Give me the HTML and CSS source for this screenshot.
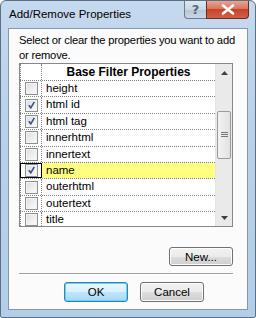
FILE: index.html
```html
<!DOCTYPE html>
<html>
<head>
<meta charset="utf-8">
<link rel="stylesheet" href="styles.css">
</head>
<body>
<div class="window">
  <div class="titlebar">
    <span class="title">Add/Remove Properties</span>
    <div class="caption-btns">
      <div class="cbtn help">?</div>
      <div class="cbtn close">
        <svg width="14" height="11" viewBox="0 0 14 11"><path d="M2 1.5 L12 9.5 M12 1.5 L2 9.5" stroke="#fff" stroke-width="2.6" stroke-linecap="round"/></svg>
      </div>
    </div>
  </div>
  <div class="client">
    <p class="intro">Select or clear the properties you want to add or remove.</p>
    <div class="listbox">
      <div class="grid">
        <div class="hrow">
          <div class="ccell"></div>
          <div class="hcell">Base Filter Properties</div>
        </div>
        <div class="row"><div class="ccell"><span class="cb"></span></div><div class="tcell">height</div></div>
        <div class="row"><div class="ccell"><span class="cb on"></span></div><div class="tcell">html id</div></div>
        <div class="row"><div class="ccell"><span class="cb on"></span></div><div class="tcell">html tag</div></div>
        <div class="row"><div class="ccell"><span class="cb"></span></div><div class="tcell">innerhtml</div></div>
        <div class="row"><div class="ccell"><span class="cb"></span></div><div class="tcell">innertext</div></div>
        <div class="row sel"><div class="ccell focus"><span class="cb on"></span></div><div class="tcell">name</div></div>
        <div class="row"><div class="ccell"><span class="cb"></span></div><div class="tcell">outerhtml</div></div>
        <div class="row"><div class="ccell"><span class="cb"></span></div><div class="tcell">outertext</div></div>
        <div class="row"><div class="ccell"><span class="cb"></span></div><div class="tcell">title</div></div>
      </div>
      <div class="scrollbar">
        <div class="arrow up"><svg width="7" height="4" viewBox="0 0 7 4"><path d="M0 4 L3.5 0 L7 4Z" fill="#404040"/></svg></div>
        <div class="track">
          <div class="thumb"><span class="grip"></span></div>
        </div>
        <div class="arrow down"><svg width="7" height="4" viewBox="0 0 7 4"><path d="M0 0 L3.5 4 L7 0Z" fill="#404040"/></svg></div>
      </div>
    </div>
    <div class="newrow"><button class="btn new">New...</button></div>
    <div class="sep"></div>
    <div class="actions">
      <button class="btn ok">OK</button>
      <button class="btn">Cancel</button>
    </div>
  </div>
</div>
</body>
</html>
```
FILE: styles.css
```css
html, body {
  margin: 0;
  padding: 0;
  width: 256px;
  height: 318px;
  overflow: hidden;
  background: #fff;
  font-family: "Liberation Sans", Arial, sans-serif;
  font-size: 11px;
  color: #000;
}
.window {
  box-sizing: border-box;
  width: 256px;
  height: 318px;
  border: 1px solid #5b6f86;
  border-radius: 6px 6px 2px 2px;
  background: linear-gradient(180deg, #c5d9ee 0%, #b9d1ea 40%, #b4cde8 100%);
  display: flex;
  flex-direction: column;
}
.titlebar {
  height: 27px;
  display: flex;
  justify-content: space-between;
  align-items: flex-start;
  padding-left: 8px;
  flex-shrink: 0;
}
.title {
  margin-top: 7px;
  font-size: 11.5px;
  color: #000;
}
.caption-btns {
  display: flex;
  margin-right: 6px;
}
.cbtn {
  height: 18px;
  box-sizing: border-box;
  border: 1px solid #6a7b8f;
  border-top: none;
  display: flex;
  align-items: center;
  justify-content: center;
}
.help {
  width: 22px;
  border-radius: 0 0 0 4px;
  border-right: none;
  background: linear-gradient(180deg, #dfe7f0 0%, #cbd6e3 50%, #b7c6d8 51%, #c9d6e5 100%);
  color: #556a80;
  font-weight: bold;
  font-size: 13px;
  font-family: "DejaVu Sans", sans-serif;
}
.close {
  width: 43px;
  border-radius: 0 0 4px 0;
  border-color: #6b2a22;
  background: linear-gradient(180deg, #e8a493 0%, #d5775f 45%, #c7432a 50%, #d26048 100%);
}
.client {
  flex: 1;
  margin: 0 7px 7px 7px;
  border: 1px solid #8597ab;
  background: #fbfbfb;
  padding: 0 14px 0 10px;
  display: flex;
  flex-direction: column;
}
.intro {
  margin: 4px -6px 0 0;
  line-height: 15px;
  font-size: 11.2px;
  letter-spacing: -0.2px;
  height: 30px;
}
.listbox {
  height: 162px;
  border: 1px solid #828790;
  background: #fff;
  display: flex;
  overflow: hidden;
}
.grid {
  flex: 1;
  display: flex;
  flex-direction: column;
}
.hrow {
  height: 17px;
  display: flex;
  flex-shrink: 0;
  border-bottom: 1px dotted #808080;
  box-sizing: border-box;
}
.row {
  height: 16.4px;
  display: flex;
  flex-shrink: 0;
  border-bottom: 1px dotted #808080;
  box-sizing: border-box;
}
.ccell {
  width: 22px;
  box-sizing: border-box;
  border-right: 1px dotted #808080;
  border-left: 1px dotted #808080;
  display: flex;
  align-items: center;
  justify-content: center;
  flex-shrink: 0;
}
.hcell {
  flex: 1;
  text-align: center;
  font-weight: bold;
  font-size: 12px;
  line-height: 16px;
  background: #fff;
}
.tcell {
  flex: 1;
  padding-left: 4px;
  line-height: 15px;
  font-size: 11.5px;
}
.row.sel .tcell { background: #ffff80; }
.ccell.focus {
  outline: 1px solid #000;
  outline-offset: -1px;
}
.cb {
  width: 11px;
  height: 11px;
  border: 1px solid #8e8f8f;
  background: linear-gradient(135deg, #dcdcdc 0%, #f0f0f0 60%, #fbfbfb 100%);
  box-shadow: inset 0 0 0 1px #f4f4f4;
  position: relative;
  display: block;
}
.cb.on::after {
  content: "";
  position: absolute;
  left: 2px;
  top: 1px;
  width: 7px;
  height: 8px;
  background: no-repeat center/7px 8px url("data:image/svg+xml;utf8,<svg xmlns='http://www.w3.org/2000/svg' width='7' height='8' viewBox='0 0 7 8'><path d='M0.8 4.2 L2.8 6.8 L6.3 0.8' fill='none' stroke='%233a4f8c' stroke-width='1.6'/></svg>");
}
.scrollbar {
  width: 17px;
  flex-shrink: 0;
  display: flex;
  flex-direction: column;
  background: #eaeaea;
  border-left: 1px solid #e4e4e4;
  box-sizing: border-box;
}
.arrow {
  height: 17px;
  display: flex;
  align-items: center;
  justify-content: center;
  flex-shrink: 0;
}
.track {
  flex: 1;
  padding-top: 30px;
}
.thumb {
  height: 48px;
  margin: 0 1px;
  border: 1px solid #9a9a9a;
  border-radius: 2px;
  background: linear-gradient(90deg, #f2f2f2, #e2e2e2);
  display: flex;
  align-items: center;
  justify-content: center;
  box-sizing: border-box;
}
.grip {
  width: 7px;
  height: 6px;
  background: repeating-linear-gradient(180deg, #777 0 1px, transparent 1px 2px);
}
.newrow {
  display: flex;
  justify-content: flex-end;
  margin-top: 20px;
}
.btn {
  font-family: "Liberation Sans", Arial, sans-serif;
  font-size: 11.5px;
  color: #000;
  width: 64px;
  height: 19px;
  padding: 0;
  border: 1px solid #707070;
  border-radius: 3px;
  background: linear-gradient(180deg, #f2f2f2 0%, #ebebeb 50%, #dddddd 51%, #cfcfcf 100%);
  box-shadow: inset 0 0 0 1px #fcfcfc;
}
.sep {
  height: 0;
  border-top: 1px solid #a0a0a0;
  border-bottom: 1px solid #fff;
  margin-top: 7px;
}
.actions {
  display: flex;
  justify-content: center;
  gap: 12px;
  margin-top: 7px;
  padding-left: 16px;
}
.actions .btn { height: 20px; }
.btn.ok {
  border-color: #3c7fb1;
  background: linear-gradient(180deg, #eaf6fd 0%, #d9f0fc 50%, #bee6fd 51%, #a7d9f5 100%);
  box-shadow: inset 0 0 0 1px #5dd3ff;
}
```
